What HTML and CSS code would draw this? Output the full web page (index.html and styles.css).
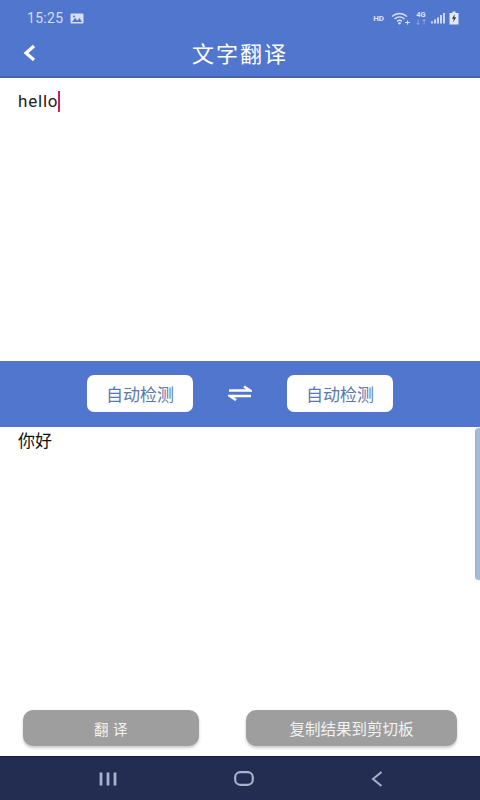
FILE: index.html
```html
<!DOCTYPE html>
<html lang="zh">
<head>
<meta charset="utf-8">
<title>文字翻译</title>
<link rel="stylesheet" href="styles.css">
</head>
<body>
<div class="screen">
  <header class="header">
    <div class="status">
      <div class="status-left">
        <span class="time">15:25</span>
        <svg class="pic" width="14" height="11" viewBox="0 0 14 11"><rect x="0.500" y="0.500" width="13" height="10" rx="1" fill="#d5def2"/><path d="M2 9l3-4 2.500 2.500L9.500 5 12 9z" fill="#5076cd"/><circle cx="4" cy="3.500" r="1" fill="#5076cd"/></svg>
      </div>
      <div class="status-right">
        <span class="hd">HD</span>
        <svg class="wifi" width="20" height="13" viewBox="0 0 20 13"><path d="M1 4.500C5.500 0.500 11.500 0.500 16 4.500M3.500 7C6.500 4.500 10.500 4.500 13.500 7M6 9.300C7.500 8 9.500 8 11 9.300" fill="none" stroke="#dbe3f5" stroke-width="1.300"/><circle cx="8.500" cy="11.300" r="1.200" fill="#dbe3f5"/><path d="M14 10.500h5M16.500 8.500v4" stroke="#dbe3f5" stroke-width="1.100"/></svg>
        <span class="net"><span class="net-top">4G</span><span class="net-bot">↓↑</span></span>
        <svg class="signal" width="14" height="12" viewBox="0 0 14 12"><path d="M1 9.500v2M4 7.500v4M7 5.500v6M10 3v8.500M13 1v10.500" stroke="#dbe3f5" stroke-width="1.800"/></svg>
        <svg class="batt" width="10" height="14" viewBox="0 0 10 14"><path d="M3.500 0.500h3v1.500h3v11.500h-9V2h3z" fill="#e3e9f7"/><path d="M5.800 3L3 7.800h1.800L4 11.500 7.200 6.300H5.300z" fill="#2b3556"/></svg>
      </div>
    </div>
    <div class="titlebar">
      <svg class="back" width="14" height="18" viewBox="0 0 14 18"><path d="M12 2L4 9l8 7" fill="none" stroke="#fff" stroke-width="3.200"/></svg>
      <h1 class="title">文字翻译</h1>
    </div>
  </header>

  <section class="input">
    <div class="typed">hello<span class="caret"></span></div>
  </section>

  <section class="langbar">
    <button class="lang">自动检测</button>
    <svg class="swap" width="24" height="16" viewBox="0 0 24 16"><path d="M1 5.500h21L16 1.500" fill="none" stroke="#fff" stroke-width="2.600"/><path d="M23 11H2l6 4" fill="none" stroke="#fff" stroke-width="2.600"/></svg>
    <button class="lang">自动检测</button>
  </section>

  <section class="result">
    <div class="output">你好</div>
    <div class="scrollbar"></div>
    <div class="actions">
      <button class="action action-translate">翻 译</button>
      <button class="action action-copy">复制结果到剪切板</button>
    </div>
  </section>

  <nav class="navbar">
    <svg width="18" height="14" viewBox="0 0 18 14"><path d="M2 0.500v13M9 0.500v13M16 0.500v13" stroke="#a9b1cf" stroke-width="2.800"/></svg>
    <svg width="20" height="15" viewBox="0 0 20 15"><rect x="1.200" y="1.200" width="17.600" height="12.600" rx="5" fill="none" stroke="#a9b1cf" stroke-width="2.200"/></svg>
    <svg width="12" height="16" viewBox="0 0 12 16"><path d="M10.500 1L2 8l8.500 7" fill="none" stroke="#a9b1cf" stroke-width="2"/></svg>
  </nav>
</div>
</body>
</html>
```

FILE: styles.css
```css
* { box-sizing: border-box; }
html, body { margin: 0; padding: 0; }
body { font-family: Roboto, "Noto Sans CJK SC", sans-serif; background: #fff; }
.screen { width: 480px; height: 800px; display: flex; flex-direction: column; overflow: hidden; }

.header { height: 78px; background: #5076cd; border-bottom: 2px solid #4563ac; display: flex; flex-direction: column; color: #fff; flex: none; }
.status { height: 36px; display: flex; justify-content: space-between; align-items: center; padding: 0 21px 0 27px; }
.status-left { display: flex; align-items: center; gap: 7px; }
.time { font-size: 14px; color: #d5def2; letter-spacing: 0.300px; }
.status-right { display: flex; align-items: center; gap: 4px; color: #dbe3f5; }
.hd { font-size: 8px; font-weight: 700; margin-right: 3px; }
.net { display: flex; flex-direction: column; align-items: center; line-height: 7px; font-size: 7.500px; font-weight: 700; }
.net-bot { font-size: 6px; opacity: .6; }
.titlebar { flex: 1; position: relative; display: flex; align-items: center; justify-content: center; padding-bottom: 2px; }
.back { position: absolute; left: 22px; top: 8px; }
.title { margin: 0; font-size: 22px; font-weight: 400; letter-spacing: 2px; line-height: 30px; }

.input { height: 283px; flex: none; padding: 12px 18px; }
.typed { font-size: 17px; line-height: 23px; letter-spacing: 0.800px; color: #222; display: flex; align-items: center; }
.caret { width: 2px; height: 21px; background: #d81b60; }

.langbar { height: 66px; flex: none; background: #5076cd; display: flex; align-items: center; justify-content: center; gap: 35px; padding-bottom: 2px; }
.lang { width: 106px; height: 37px; background: #fff; border: 0; border-radius: 7px; color: #5a78b5; font-family: inherit; font-size: 17px; padding: 0; }

.result { flex: 1; position: relative; display: flex; flex-direction: column; justify-content: space-between; padding: 3px 23px 10px 18px; }
.output { font-size: 17px; line-height: 22px; color: #111; }
.scrollbar { position: absolute; right: 0; top: 1px; width: 5px; height: 152px; background: #a6bcd6; border-left: 1px solid #9fb0c5; border-radius: 4px 0 0 4px; }
.actions { display: flex; justify-content: space-between; padding-left: 5px; }
.action { height: 36px; border: 0; border-radius: 10px; background: #9e9e9e; color: #f2f2f2; font-family: inherit; font-size: 14.500px; box-shadow: 0 2px 3px rgba(0,0,0,.22); padding: 0; }
.action-translate { width: 176px; letter-spacing: 0.500px; }
.action-copy { width: 211px; font-size: 15.500px; }

.navbar { height: 44px; flex: none; background: #222d51; border-top: 1px solid #151c3c; display: flex; align-items: center; justify-content: space-between; padding: 0 97px 0 99px; }
```
